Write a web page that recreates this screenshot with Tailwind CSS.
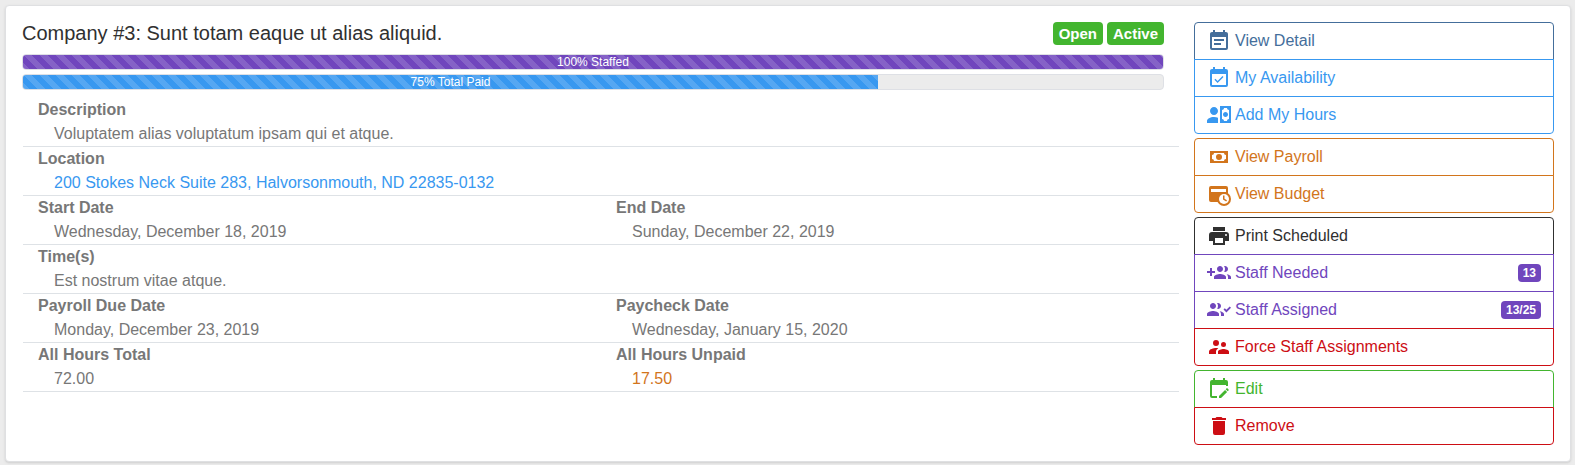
<!DOCTYPE html>
<html lang="en">
<head>
<meta charset="utf-8">
<meta name="viewport" content="width=device-width, initial-scale=1">
<title>Company #3</title>
<script src="https://cdn.jsdelivr.net/npm/@tailwindcss/browser@4"></script>
</head>
<body class="bg-[#ececec] pt-[5px] pr-1 pb-[3px] pl-[5px] font-['Liberation_Sans',Arial,sans-serif] text-base text-[#777]">
<main class="flex gap-[15px] rounded border border-[#dfe0e2] bg-white p-4 shadow-sm">
  <section class="min-w-0 flex-1">
    <div class="mr-[15px]">
      <header class="flex h-8 items-start justify-between">
        <h1 class="text-xl leading-[22px] text-[#303030]">Company #3: Sunt totam eaque ut alias aliquid.</h1>
        <div class="flex gap-1 text-[15px] leading-[23px] font-bold text-white">
          <span class="rounded bg-[#43b52f] px-1.5">Open</span>
          <span class="rounded bg-[#43b52f] px-1.5">Active</span>
        </div>
      </header>
      <div class="flex flex-col gap-1 text-xs leading-[14px] text-white">
        <div class="overflow-hidden rounded border border-[#dee0e5] bg-[#ececec]" role="progressbar" aria-valuenow="100" aria-label="Staffed">
          <div class="bg-[#7046bd] bg-[linear-gradient(45deg,rgba(255,255,255,.15)_25%,transparent_25%,transparent_50%,rgba(255,255,255,.15)_50%,rgba(255,255,255,.15)_75%,transparent_75%,transparent)] bg-[length:16px_16px] text-center" style="width:100%">100% Staffed</div>
        </div>
        <div class="overflow-hidden rounded border border-[#dee0e5] bg-[#ececec]" role="progressbar" aria-valuenow="75" aria-label="Total paid">
          <div class="bg-[#3898f0] bg-[linear-gradient(45deg,rgba(255,255,255,.15)_25%,transparent_25%,transparent_50%,rgba(255,255,255,.15)_50%,rgba(255,255,255,.15)_75%,transparent_75%,transparent)] bg-[length:16px_16px] text-center" style="width:75%">75% Total Paid</div>
        </div>
      </div>
    </div>
    <dl class="mt-2 ml-px leading-6 [&_dt]:font-bold [&_dd]:pl-4">
      <div class="border-b border-[#dee2e6] px-[15px]"><dt>Description</dt><dd>Voluptatem alias voluptatum ipsam qui et atque.</dd></div>
      <div class="border-b border-[#dee2e6] px-[15px]"><dt>Location</dt><dd><a href="#" class="text-[#3898f0]">200 Stokes Neck Suite 283, Halvorsonmouth, ND 22835-0132</a></dd></div>
      <div class="grid grid-cols-2 border-b border-[#dee2e6]">
        <div class="px-[15px]"><dt>Start Date</dt><dd>Wednesday, December 18, 2019</dd></div>
        <div class="px-[15px]"><dt>End Date</dt><dd>Sunday, December 22, 2019</dd></div>
      </div>
      <div class="border-b border-[#dee2e6] px-[15px]"><dt>Time(s)</dt><dd>Est nostrum vitae atque.</dd></div>
      <div class="grid grid-cols-2 border-b border-[#dee2e6]">
        <div class="px-[15px]"><dt>Payroll Due Date</dt><dd>Monday, December 23, 2019</dd></div>
        <div class="px-[15px]"><dt>Paycheck Date</dt><dd>Wednesday, January 15, 2020</dd></div>
      </div>
      <div class="grid grid-cols-2 border-b border-[#dee2e6]">
        <div class="px-[15px]"><dt>All Hours Total</dt><dd>72.00</dd></div>
        <div class="px-[15px]"><dt>All Hours Unpaid</dt><dd class="text-[#d2751c]">17.50</dd></div>
      </div>
    </dl>
  </section>
  <nav class="flex w-[360px] shrink-0 flex-col gap-1 leading-6 [&_a]:flex [&_a]:items-center [&_a]:gap-1 [&_a]:border [&_a]:border-current [&_a]:px-3 [&_a]:py-1.5 [&_a+a]:-mt-px [&_a:first-child]:rounded-t [&_a:last-child]:rounded-b [&_svg]:size-6 [&_svg]:shrink-0 [&_svg]:fill-current">
    <div>
      <a href="#" class="text-[#446e9b]"><svg viewBox="0 0 24 24"><path d="M14,14H7V16H14M19,19H5V8H19M19,3H18V1H16V3H8V1H6V3H5C3.89,3 3,3.9 3,5V19A2,2 0 0,0 5,21H19A2,2 0 0,0 21,19V5C21,3.89 20.1,3 19,3M17,10H7V12H17V10Z"/></svg>View Detail</a>
      <a href="#" class="text-[#3898f0]"><svg viewBox="0 0 24 24"><path d="M19,19H5V8H19M19,3H18V1H16V3H8V1H6V3H5C3.89,3 3,3.9 3,5V19A2,2 0 0,0 5,21H19A2,2 0 0,0 21,19V5A2,2 0 0,0 19,3M16.53,11.06L15.47,10L10.59,14.88L8.47,12.76L7.41,13.82L10.59,17L16.53,11.06Z"/></svg>My Availability</a>
      <a href="#" class="text-[#3898f0]"><svg viewBox="0 0 24 24"><path d="M11 8C11 10.21 9.21 12 7 12C4.79 12 3 10.21 3 8C3 5.79 4.79 4 7 4C9.21 4 11 5.79 11 8M11 14.72V20H0V18C0 15.79 3.13 14 7 14C8.5 14 9.87 14.27 11 14.72M24 20H13V3H24V20M16 11.5C16 12.88 17.12 14 18.5 14C19.88 14 21 12.88 21 11.5C21 10.12 19.88 9 18.5 9C17.12 9 16 10.12 16 11.5M22 7C20.9 7 20 6.11 20 5H17C17 6.11 16.11 7 15 7V16C16.11 16 17 16.9 17 18H20C20 16.9 20.9 16 22 16V7Z"/></svg>Add My Hours</a>
    </div>
    <div>
      <a href="#" class="text-[#d2751c]"><svg viewBox="0 0 24 24"><path fill-rule="evenodd" d="M3,6H21V18H3V6M12,9A3,3 0 0,1 15,12A3,3 0 0,1 12,15A3,3 0 0,1 9,12A3,3 0 0,1 12,9M7,8A2,2 0 0,1 5,10V14A2,2 0 0,1 7,16H17A2,2 0 0,1 19,14V10A2,2 0 0,1 17,8H7Z"/></svg>View Payroll</a>
      <a href="#" class="text-[#d2751c]"><svg viewBox="0 0 24 24"><path fill-rule="evenodd" d="M4 4H19A2 2 0 0 1 21 6V20H4A2 2 0 0 1 2 18V6A2 2 0 0 1 4 4M4 7V10H19V7Z"/><circle cx="17" cy="17" r="7"/><circle cx="17" cy="17" r="5" class="fill-white"/><path d="M16 13.5H17.5V16.8L20 18.3L19.2 19.5L16 17.6Z"/></svg>View Budget</a>
    </div>
    <div>
      <a href="#" class="text-[#303030]"><svg viewBox="0 0 24 24"><path d="M18,3H6V7H18M19,12A1,1 0 0,1 18,11A1,1 0 0,1 19,10A1,1 0 0,1 20,11A1,1 0 0,1 19,12M16,19H8V14H16M19,8H5A3,3 0 0,0 2,11V17H6V21H18V17H22V11A3,3 0 0,0 19,8Z"/></svg>Print Scheduled</a>
      <a href="#" class="text-[#7046bd]"><svg viewBox="0 0 24 24"><path d="M13 13C11 13 7 14 7 16V18H19V16C19 14 15 13 13 13M19.62 13.16C20.45 13.88 21 14.82 21 16V18H24V16C24 14.46 21.63 13.5 19.62 13.16M13 11C14.66 11 16 9.66 16 8C16 6.34 14.66 5 13 5C11.34 5 10 6.34 10 8C10 9.66 11.34 11 13 11M18 11C19.66 11 21 9.66 21 8C21 6.34 19.66 5 18 5C17.68 5 17.37 5.05 17.08 5.14C17.65 5.95 18 6.94 18 8C18 9.06 17.65 10.04 17.08 10.85C17.37 10.94 17.68 11 18 11M8 10H5V7H3V10H0V12H3V15H5V12H8V10Z"/></svg>Staff Needed<span class="ml-auto rounded bg-[#7046bd] px-[5px] text-xs leading-[18px] font-bold text-white">13</span></a>
      <a href="#" class="text-[#7046bd]"><svg viewBox="0 0 24 24"><path transform="translate(-7 0)" d="M13 13C11 13 7 14 7 16V18H19V16C19 14 15 13 13 13M19.62 13.16C20.45 13.88 21 14.82 21 16V18H24V16C24 14.46 21.63 13.5 19.62 13.16M13 11C14.66 11 16 9.66 16 8C16 6.34 14.66 5 13 5C11.34 5 10 6.34 10 8C10 9.66 11.34 11 13 11M18 11C19.66 11 21 9.66 21 8C21 6.34 19.66 5 18 5C17.68 5 17.37 5.05 17.08 5.14C17.65 5.95 18 6.94 18 8C18 9.06 17.65 10.04 17.08 10.85C17.37 10.94 17.68 11 18 11Z"/><path d="M16.5 11.5L17.8 10.2L19.4 11.8L22.7 8.5L24 9.8L19.4 14.4Z"/></svg>Staff Assigned<span class="ml-auto rounded bg-[#7046bd] px-[5px] text-xs leading-[18px] font-bold text-white">13/25</span></a>
      <a href="#" class="text-[#cd0e14]"><svg viewBox="0 0 24 24"><path d="M16.5,12A2.5,2.5 0 0,0 19,9.5A2.5,2.5 0 0,0 16.5,7A2.5,2.5 0 0,0 14,9.5A2.5,2.5 0 0,0 16.5,12M9,11A3,3 0 0,0 12,8A3,3 0 0,0 9,5A3,3 0 0,0 6,8A3,3 0 0,0 9,11M16.5,14C14.67,14 11,14.92 11,16.75V19H22V16.75C22,14.92 18.33,14 16.5,14M9,13C6.67,13 2,14.17 2,16.5V19H9V16.75C9,15.9 9.33,14.41 11.37,13.28C10.5,13.1 9.66,13 9,13Z"/></svg>Force Staff Assignments</a>
    </div>
    <div>
      <a href="#" class="text-[#43b52f]"><svg viewBox="0 0 24 24"><path d="M19,3H18V1H16V3H8V1H6V3H5A2,2 0 0,0 3,5V19A2,2 0 0,0 5,21H10V19H5V8H19V9H21V5A2,2 0 0,0 19,3M21.7,13.35L20.7,14.35L18.65,12.35L19.65,11.35C19.85,11.14 20.19,11.13 20.42,11.35L21.7,12.63C21.89,12.83 21.89,13.15 21.7,13.35M12,18.94L18.07,12.88L20.12,14.88L14.06,21H12V18.94Z"/></svg>Edit</a>
      <a href="#" class="text-[#cd0e14]"><svg viewBox="0 0 24 24"><path d="M19,4H15.5L14.5,3H9.5L8.5,4H5V6H19M6,19A2,2 0 0,0 8,21H16A2,2 0 0,0 18,19V7H6V19Z"/></svg>Remove</a>
    </div>
  </nav>
</main>
</body>
</html>
